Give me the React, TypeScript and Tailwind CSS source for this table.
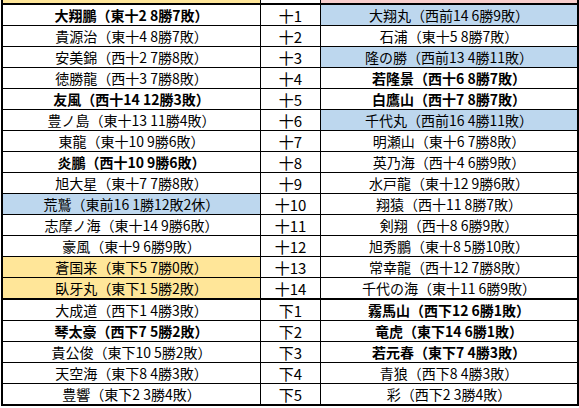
import React from "react"

type Side = { text: string; bold?: boolean; fill?: "blue" | "gold" }

const rows: { left: Side; rank: string; right: Side }[] = [
  { left: { text: "大翔鵬（東十2 8勝7敗）", bold: true }, rank: "十1", right: { text: "大翔丸（西前14 6勝9敗）", fill: "blue" } },
  { left: { text: "貴源治（東十4 8勝7敗）" }, rank: "十2", right: { text: "石浦（東十5 8勝7敗）" } },
  { left: { text: "安美錦（西十2 7勝8敗）" }, rank: "十3", right: { text: "隆の勝（西前13 4勝11敗）", fill: "blue" } },
  { left: { text: "徳勝龍（西十3 7勝8敗）" }, rank: "十4", right: { text: "若隆景（西十6 8勝7敗）", bold: true } },
  { left: { text: "友風（西十14 12勝3敗）", bold: true }, rank: "十5", right: { text: "白鷹山（西十7 8勝7敗）", bold: true } },
  { left: { text: "豊ノ島（東十13 11勝4敗）" }, rank: "十6", right: { text: "千代丸（西前16 4勝11敗）", fill: "blue" } },
  { left: { text: "東龍（東十10 9勝6敗）" }, rank: "十7", right: { text: "明瀬山（東十6 7勝8敗）" } },
  { left: { text: "炎鵬（西十10 9勝6敗）", bold: true }, rank: "十8", right: { text: "英乃海（西十4 6勝9敗）" } },
  { left: { text: "旭大星（東十7 7勝8敗）" }, rank: "十9", right: { text: "水戸龍（東十12 9勝6敗）" } },
  { left: { text: "荒鷲（東前16 1勝12敗2休）", fill: "blue" }, rank: "十10", right: { text: "翔猿（西十11 8勝7敗）" } },
  { left: { text: "志摩ノ海（東十14 9勝6敗）" }, rank: "十11", right: { text: "剣翔（西十8 6勝9敗）" } },
  { left: { text: "豪風（東十9 6勝9敗）" }, rank: "十12", right: { text: "旭秀鵬（東十8 5勝10敗）" } },
  { left: { text: "蒼国来（東下5 7勝0敗）", fill: "gold" }, rank: "十13", right: { text: "常幸龍（西十12 7勝8敗）" } },
  { left: { text: "臥牙丸（東下1 5勝2敗）", fill: "gold" }, rank: "十14", right: { text: "千代の海（東十11 6勝9敗）" } },
  { left: { text: "大成道（西下1 4勝3敗）" }, rank: "下1", right: { text: "霧馬山（西下12 6勝1敗）", bold: true } },
  { left: { text: "琴太豪（西下7 5勝2敗）", bold: true }, rank: "下2", right: { text: "竜虎（東下14 6勝1敗）", bold: true } },
  { left: { text: "貴公俊（東下10 5勝2敗）" }, rank: "下3", right: { text: "若元春（東下7 4勝3敗）", bold: true } },
  { left: { text: "天空海（東下8 4勝3敗）" }, rank: "下4", right: { text: "青狼（西下8 4勝3敗）" } },
  { left: { text: "豊響（東下2 3勝4敗）" }, rank: "下5", right: { text: "彩（西下2 3勝4敗）" } },
]

function cellClass(side: Side) {
  const fill =
    side.fill === "blue" ? "bg-[#bdd7ee]" : side.fill === "gold" ? "bg-[#ffe699]" : "bg-white"
  return `${fill} ${side.bold ? "font-bold" : "font-normal"}`
}

export default function App() {
  return (
    <div
      className="w-[579px] h-[408px] overflow-hidden bg-white text-black text-[14px]"
      style={{ fontFamily: '"Noto Sans CJK JP", "Liberation Sans", sans-serif' }}
    >
      <div className="ml-px w-[578px] border-x-2 border-black">
        {/* header strip, cut off at the top */}
        <div className="flex h-[3px]">
          <div className="w-[258px] border-r border-black bg-[#ffe699]" />
          <div className="w-[60px] border-r border-black bg-white" />
          <div className="flex-1 bg-[#f8cecc]" />
        </div>
        <div className="border-y-2 border-black">
          {rows.map((row, i) => (
            <div
              key={row.rank}
              className={`flex ${
                i === 13 ? "h-[22px] border-b-2" : i === rows.length - 1 ? "h-[20px]" : "h-[21px] border-b"
              } border-black leading-none`}
            >
              <div
                className={`flex w-[258px] items-center justify-center border-r border-black ${cellClass(row.left)}`}
              >
                {row.left.text}
              </div>
              <div className="flex w-[60px] items-center justify-center border-r border-black bg-white text-[15px]">
                {row.rank}
              </div>
              <div className={`flex flex-1 items-center justify-center ${cellClass(row.right)}`}>
                {row.right.text}
              </div>
            </div>
          ))}
        </div>
      </div>
    </div>
  )
}
